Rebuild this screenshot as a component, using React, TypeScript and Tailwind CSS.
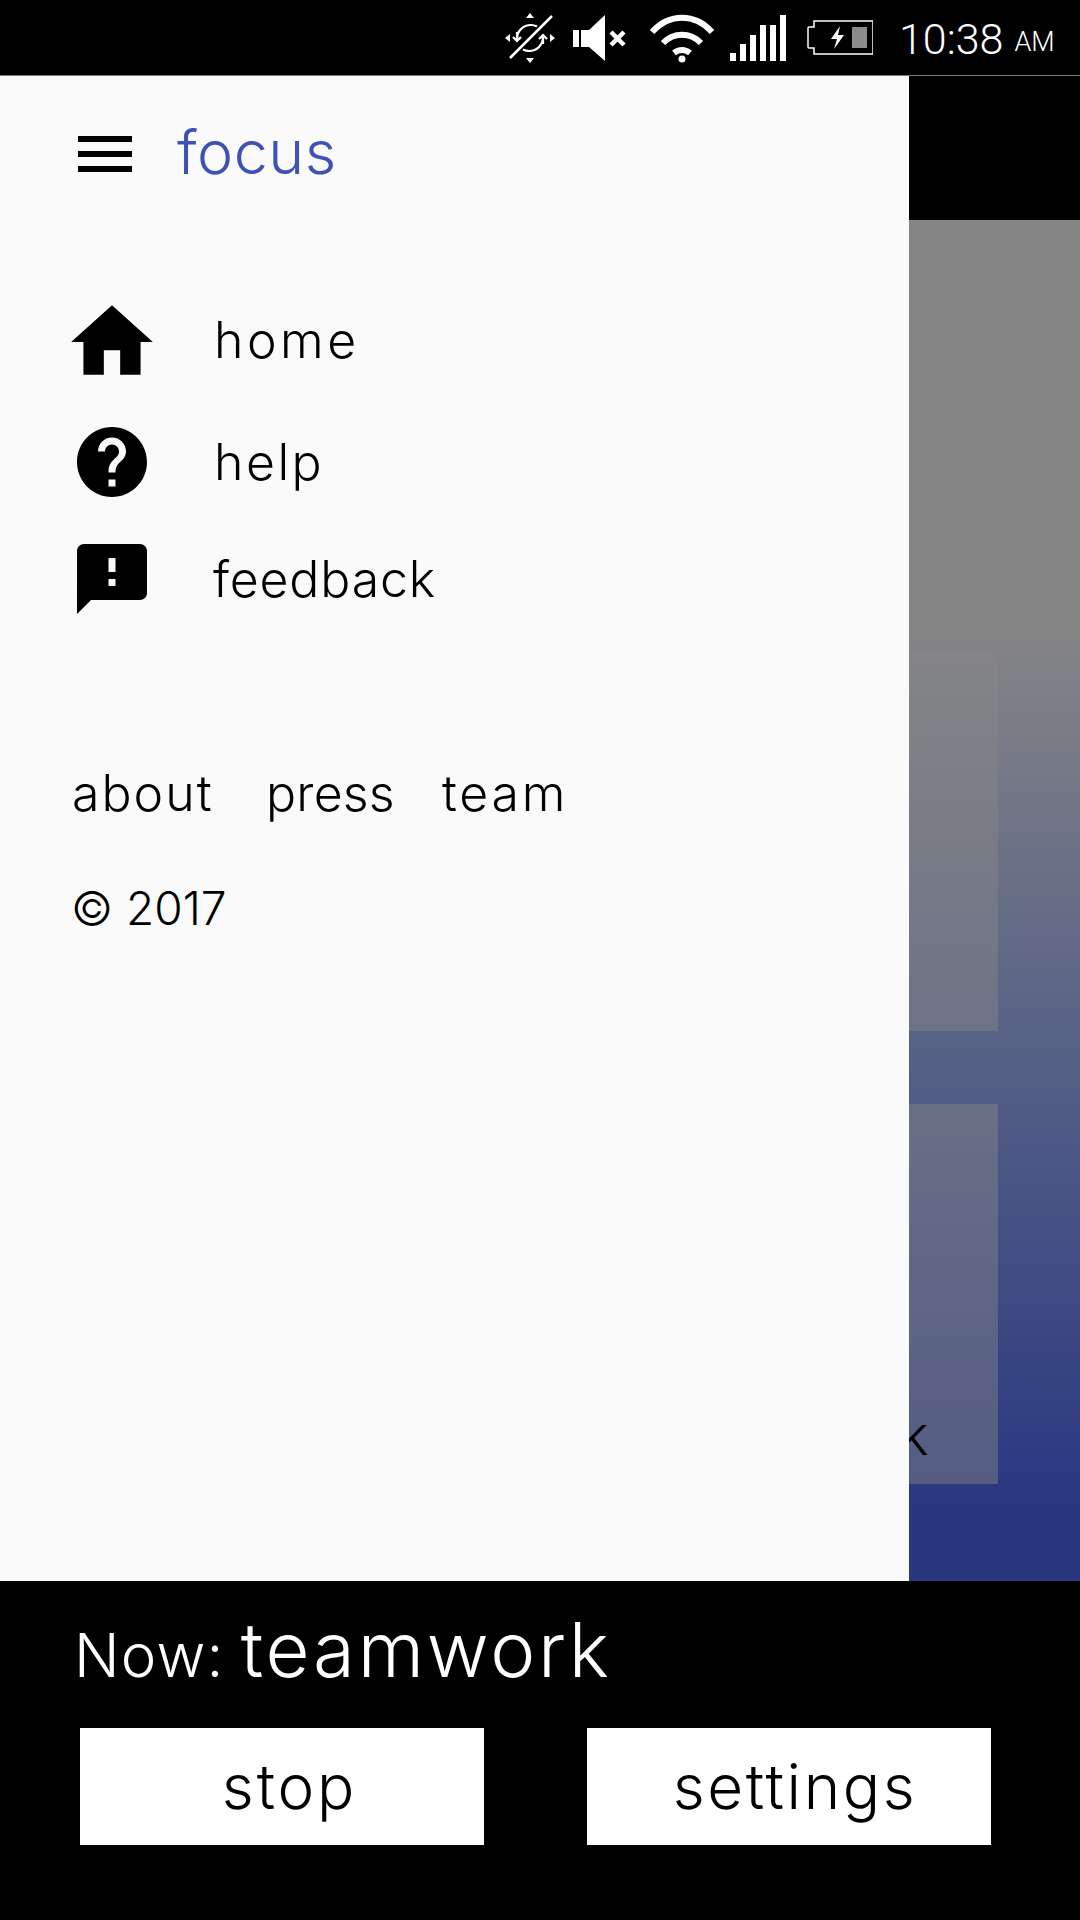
import React from 'react';

const font = "font-['Inter','Noto_Sans',sans-serif] font-light";

const StatusIcons = () => (
  <>
    <svg width="52" height="52" viewBox="0 0 52 52" fill="none" stroke="#fff" strokeWidth="2.2" className="mr-[17px]">
      <path d="M26 1l-4 5h8zM26 51l-4-5h8zM1 26l5-4v8zM51 26l-5-4v8z" fill="#fff" stroke="none" />
      <path d="M13 27c0-8 6-14 14-14 2 0 4 .5 6 1.500M39 25c0 8-6 14-14 14-2 0-4-.5-6-1.500" />
      <path d="M13 20v9M9 25l4 4 4-4M39 32v-9M35 27l4-4 4 4" />
      <path d="M6 46L48 4" strokeWidth="2.500" />
    </svg>
    <svg width="57" height="46" viewBox="0 0 57 46" fill="#fff" className="mr-[19px]">
      <path d="M0 15h6v17H0zM8 15h8L32 0v46L16 32H8z" />
      <path d="M38 17l13 13M51 17L38 30" stroke="#fff" strokeWidth="4.500" fill="none" />
    </svg>
    <svg width="66" height="50" viewBox="0 0 66 50" fill="none" stroke="#fff" strokeWidth="6" className="mr-[15px]">
      <path d="M3 19C20 0 46 0 63 19" />
      <path d="M14 30c11-11 27-11 38 0" />
      <path d="M25 40c5-4 11-4 16 0" />
      <circle cx="33" cy="46" r="3.500" fill="#fff" stroke="none" />
    </svg>
    <svg width="56" height="46" viewBox="0 0 56 46" fill="#fff" className="mr-[21px]">
      <path d="M0 38h6v8H0zM10 29h6v17h-6zM20 20h6v26h-6zM30 10h6v36h-6zM40 10h6v36h-6zM50 0h6v46h-6z" />
    </svg>
    <svg width="66" height="35" viewBox="0 0 66 35" fill="none" className="mr-[26px]">
      <path d="M7 1h59v33H7v-6H2a1 1 0 0 1-1-1V8a1 1 0 0 1 1-1h5z" stroke="#fff" strokeWidth="1.500" />
      <path d="M33 6L24 19h6l-3 10 10-14h-6z" fill="#fff" />
      <rect x="45" y="7" width="15" height="21" fill="#8c8c8c" />
    </svg>
  </>
);

const Icon = ({ d }: { d: string }) => (
  <svg width="84" height="84" viewBox="0 0 24 24" fill="#000" className="shrink-0">
    <path d={d} />
  </svg>
);

const App: React.FC = () => {
  return (
    <div className={`w-[1080px] h-[1920px] flex flex-col overflow-hidden bg-black ${font}`}>
      {/* status bar */}
      <div className="h-[76px] flex items-center pl-[504px] border-b border-[#777]">
        <StatusIcons />
        <span className="font-['Roboto',sans-serif] font-light text-white text-[43px] leading-none mt-[3px]">10:38</span>
        <span className="font-['Roboto',sans-serif] font-light text-white text-[27px] leading-none ml-[11px] mt-[9px]">AM</span>
      </div>

      <div className="h-[1505px] flex">
        {/* drawer */}
        <div className="w-[909px] shrink-0 bg-[#fafafa] pl-[78px] text-black">
          <div className="flex items-center h-[156px]">
            <div className="flex flex-col gap-[9px] w-[54px]">
              <div className="h-[6px] bg-black" />
              <div className="h-[6px] bg-black" />
              <div className="h-[6px] bg-black" />
            </div>
            <span className="text-[#3f51b5] text-[61px] leading-none ml-[45px] tracking-[0.5px] mb-[4px]">focus</span>
          </div>

          <div className="flex items-center h-[98px] mt-[61px] -ml-[15px]">
            <svg width="98" height="98" viewBox="0 0 24 24" fill="#000" className="shrink-0">
              <path d="M10 20v-6h4v6h5v-8h3L12 3 2 12h3v8z" />
            </svg>
            <span className="text-[50px] leading-none ml-[53px] tracking-[3.500px] mt-[-4px]">home</span>
          </div>
          <div className="flex items-center h-[84px] mt-[29px] -ml-[8px]">
            <Icon d="M12 2C6.480 2 2 6.480 2 12s4.480 10 10 10 10-4.480 10-10S17.520 2 12 2zm1 17h-2v-2h2v2zm2.070-7.750l-.9.920C13.450 12.900 13 13.500 13 15h-2v-.5c0-1.100.450-2.100 1.170-2.830l1.240-1.260c.370-.360.590-.860.590-1.410 0-1.100-.9-2-2-2s-2 .9-2 2H8c0-2.210 1.790-4 4-4s4 1.790 4 4c0 .880-.360 1.680-.930 2.250z" />
            <span className="text-[50px] leading-none ml-[60px] tracking-[2.500px]">help</span>
          </div>
          <div className="flex items-center h-[84px] mt-[33px] -ml-[8px]">
            <Icon d="M20 2H4c-1.100 0-1.990.9-1.990 2L2 22l4-4h14c1.100 0 2-.9 2-2V4c0-1.100-.9-2-2-2zm-7 12h-2v-2h2v2zm0-4h-2V6h2v4z" />
            <span className="text-[50px] leading-none ml-[59px] tracking-[0.8px] mb-[1px]">feedback</span>
          </div>

          <div className="flex text-[50px] leading-none mt-[147px] -ml-[6px]">
            <span className="w-[194px] tracking-[2px]">about</span>
            <span className="w-[176px] tracking-[0.2px]">press</span>
            <span className="tracking-[2.800px]">team</span>
          </div>
          <div className="text-[46px] leading-none mt-[67px] -ml-[7px]">© 2017</div>
        </div>

        {/* page behind the drawer */}
        <div className="flex-1 flex flex-col overflow-hidden">
          <div className="h-[144px] bg-black shrink-0" />
          <div className="flex-1 bg-linear-to-b from-[#858585] from-30% to-[#2a3580] to-95% pt-[431px] flex flex-col gap-[73px]">
            <div className="w-[89px] h-[380px] bg-[#888]/45" />
            <div className="w-[89px] h-[380px] bg-[#888]/45 flex items-end overflow-hidden">
              <span className="text-[54px] leading-none text-black -ml-[9px] mb-[21px]">k</span>
            </div>
          </div>
        </div>
      </div>

      {/* now playing */}
      <div className="flex-1 bg-black text-white">
        <div className="flex items-baseline pl-[74px] h-[147px] pt-[30px]">
          <span className="text-[60px] leading-none tracking-[1.200px]">Now:</span>
          <span className="text-[76px] leading-none ml-[16px] tracking-[2.800px]">teamwork</span>
        </div>
        <div className="flex pl-[80px] gap-[103px]">
          <button className="w-[404px] h-[117px] pl-[15px] bg-white text-black text-[62px] leading-none tracking-[2.800px]">stop</button>
          <button className="w-[404px] h-[117px] pl-[12px] bg-white text-black text-[62px] leading-none tracking-[2.600px]">settings</button>
        </div>
      </div>
    </div>
  );
};

export default App;
